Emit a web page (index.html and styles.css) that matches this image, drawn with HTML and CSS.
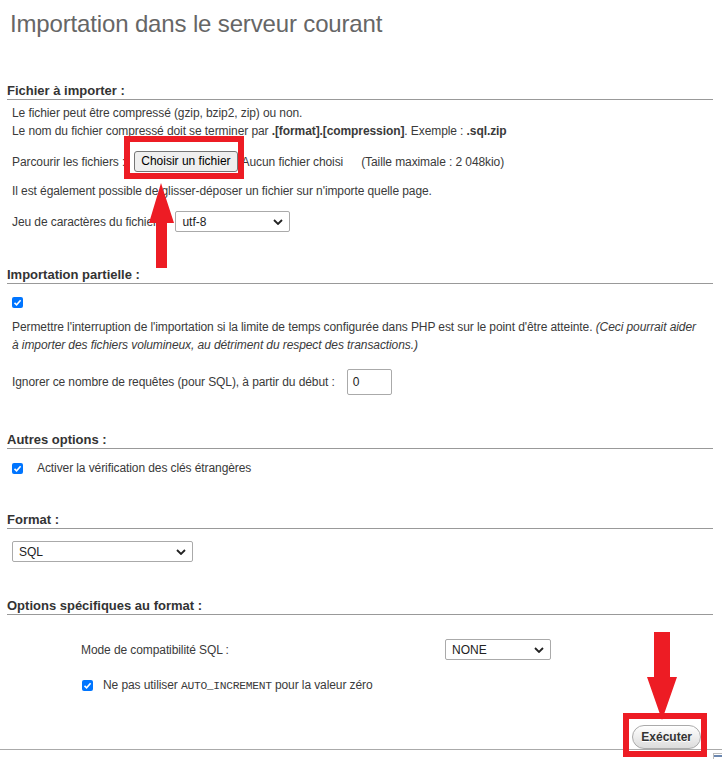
FILE: index.html
```html
<!DOCTYPE html>
<html lang="fr">
<head>
<meta charset="utf-8">
<title>Importation</title>
<link rel="stylesheet" href="styles.css">
</head>
<body>
<div class="page">
  <h2 class="title">Importation dans le serveur courant</h2>

  <section class="sec sec-file">
    <h3 class="sec-h">Fichier à importer :</h3>
    <div class="sec-body">
      <p class="line first">Le fichier peut être compressé (gzip, bzip2, zip) ou non.</p>
      <p class="line">Le nom du fichier compressé doit se terminer par <b>.[format].[compression]</b>. Exemple : <b>.sql.zip</b></p>
      <div class="row row-file">
        <span>Parcourir les fichiers :</span>
        <span class="file-btn">Choisir un fichier</span>
        <span class="file-none">Aucun fichier choisi</span>
        <span class="maxsize">(Taille maximale : 2 048kio)</span>
      </div>
      <p class="line line-drop">Il est également possible de glisser-déposer un fichier sur n'importe quelle page.</p>
      <div class="row row-charset">
        <span>Jeu de caractères du fichier :</span>
        <div class="select sel-charset"><span>utf-8</span><svg class="chev" viewBox="0 0 10 6" width="10" height="6"><path d="M1 1 L5 5 L9 1" fill="none" stroke="#222" stroke-width="1.8"/></svg></div>
      </div>
    </div>
  </section>

  <section class="sec sec-partial">
    <h3 class="sec-h">Importation partielle :</h3>
    <div class="sec-body">
      <div class="cb-solo"><span class="cb"><svg viewBox="0 0 11 11" width="11" height="11"><path d="M2.5 5.8 L4.6 7.8 L8.6 3.2" fill="none" stroke="#fff" stroke-width="1.6"/></svg></span></div>
      <p class="line para">Permettre l'interruption de l'importation si la limite de temps configurée dans PHP est sur le point d'être atteinte. <i>(Ceci pourrait aider à importer des fichiers volumineux, au détriment du respect des transactions.)</i></p>
      <div class="row row-skip">
        <span>Ignorer ce nombre de requêtes (pour SQL), à partir du début :</span>
        <span class="num-input">0</span>
      </div>
    </div>
  </section>

  <section class="sec sec-other">
    <h3 class="sec-h">Autres options :</h3>
    <div class="sec-body">
      <div class="row cb-row"><span class="cb"><svg viewBox="0 0 11 11" width="11" height="11"><path d="M2.5 5.8 L4.6 7.8 L8.6 3.2" fill="none" stroke="#fff" stroke-width="1.6"/></svg></span><span class="cb-label">Activer la vérification des clés étrangères</span></div>
    </div>
  </section>

  <section class="sec sec-format">
    <h3 class="sec-h">Format :</h3>
    <div class="sec-body">
      <div class="select sel-format"><span>SQL</span><svg class="chev" viewBox="0 0 10 6" width="10" height="6"><path d="M1 1 L5 5 L9 1" fill="none" stroke="#222" stroke-width="1.8"/></svg></div>
    </div>
  </section>

  <section class="sec sec-specific">
    <h3 class="sec-h">Options spécifiques au format :</h3>
    <div class="opt-grid">
      <span class="opt-label">Mode de compatibilité SQL :</span>
      <div class="select sel-mode"><span>NONE</span><svg class="chev" viewBox="0 0 10 6" width="10" height="6"><path d="M1 1 L5 5 L9 1" fill="none" stroke="#222" stroke-width="1.8"/></svg></div>
    </div>
    <div class="row cb-row cb-row-ai"><span class="cb"><svg viewBox="0 0 11 11" width="11" height="11"><path d="M2.5 5.8 L4.6 7.8 L8.6 3.2" fill="none" stroke="#fff" stroke-width="1.6"/></svg></span><span class="cb-label">Ne pas utiliser <code>AUTO_INCREMENT</code> pour la valeur zéro</span></div>
  </section>
</div>

<div class="footer">
  <span class="go-btn">Exécuter</span>
</div>

<span class="corner-icon"></span>

<svg class="annot" width="722" height="759" viewBox="0 0 722 759">
  <rect x="127" y="139" width="114" height="37" fill="none" stroke="#ed1c24" stroke-width="6"/>
  <polygon points="161,183 174,223 167,223 167,268 156,268 156,223 149,223" fill="#ed1c24"/>
  <polygon points="654,632 670,632 670,677 677,677 662,720 647,677 654,677" fill="#ed1c24"/>
  <rect x="626" y="716" width="78" height="38" fill="none" stroke="#ed1c24" stroke-width="6"/>
</svg>
</body>
</html>
```

FILE: styles.css
```css
html, body {
  margin: 0;
  padding: 0;
  background: #fff;
}
body {
  font-family: "Liberation Sans", Arial, sans-serif;
  font-size: 12px;
  color: #3a3a3a;
  width: 722px;
  height: 759px;
  overflow: hidden;
  position: relative;
}
.page {
  padding: 10px 9px 0 7px;
}
.title {
  margin: 0 0 0 3px;
  font-size: 24px;
  line-height: 28px;
  font-weight: normal;
  color: #666;
  letter-spacing: -0.15px;
}
.sec-h {
  margin: 0;
  font-size: 13px;
  line-height: 16px;
  font-weight: bold;
  color: #333;
  border-bottom: 1px solid #999;
  padding-left: 0;
}
.sec-file { margin-top: 45px; }
.sec-partial { margin-top: 35px; }
.sec-other { margin-top: 37px; }
.sec-format { margin-top: 35px; }
.sec-specific { margin-top: 36px; }

.sec-body {
  padding-left: 5px;
  letter-spacing: -0.09px;
}
.line {
  margin: 0;
  line-height: 18px;
}
.line.first { margin-top: 4px; }
.row {
  display: flex;
  align-items: center;
}
.row-file {
  margin-top: 11px;
  height: 21px;
}
.file-btn {
  margin-left: 9px;
  height: 19px;
  line-height: 19px;
  padding: 0 6px;
  background: #efefef;
  border: 1px solid #767676;
  border-radius: 3px;
  color: #000;
  letter-spacing: 0;
}
.file-none {
  margin-left: 4px;
}
.maxsize {
  margin-left: 18px;
}
.line-drop { margin-top: 10px; }
.row-charset {
  margin-top: 11px;
  height: 21px;
}
.select {
  box-sizing: border-box;
  height: 21px;
  border: 1px solid #aaa;
  border-radius: 2px;
  background: #fff;
  display: flex;
  align-items: center;
  justify-content: space-between;
  padding: 0 6px 0 6px;
  color: #222;
  letter-spacing: 0;
}
.sel-charset {
  margin-left: 12px;
  width: 115px;
}
.chev { display: block; }

.cb-solo {
  margin-top: 13px;
  height: 11px;
  display: flex;
}
.cb {
  box-sizing: border-box;
  width: 11px;
  height: 11px;
  background: #0075ff;
  border-radius: 2px;
  display: inline-flex;
  flex: none;
}
.cb svg { display: block; }
.para {
  margin-top: 10px;
  max-width: 692px;
}
.row-skip {
  margin-top: 15px;
  height: 26px;
}
.num-input {
  box-sizing: border-box;
  margin-left: 12px;
  width: 45px;
  height: 26px;
  border: 1px solid #aaa;
  border-radius: 2px;
  padding-left: 5px;
  line-height: 24px;
  color: #222;
}
.cb-row {
  margin-top: 10px;
  height: 18px;
}
.cb-label {
  margin-left: 14px;
}
.sel-format {
  margin-top: 12px;
  width: 181px;
}
.opt-grid {
  display: grid;
  grid-template-columns: 364px 106px;
  align-items: center;
  padding-left: 74px;
  margin-top: 24px;
  letter-spacing: -0.09px;
}
.sel-mode {
  width: 106px;
}
.cb-row-ai {
  margin-top: 16px;
  padding-left: 75px;
  letter-spacing: -0.09px;
}
.cb-row-ai .cb-label { margin-left: 10px; }
code {
  font-family: "Liberation Mono", "DejaVu Sans Mono", monospace;
  font-size: 11.3px;
  letter-spacing: -0.3px;
}
.footer {
  position: absolute;
  left: 0;
  right: 0;
  top: 725px;
  display: flex;
  justify-content: flex-end;
  padding-right: 21px;
  border-bottom: 1px solid #aaa;
}
.go-btn {
  box-sizing: border-box;
  height: 24px;
  line-height: 22px;
  padding: 0 8px;
  border: 1px solid #aaa;
  border-radius: 12px;
  background: linear-gradient(#ffffff, #dcdcdc);
  font-weight: bold;
  color: #333;
  text-shadow: 0 1px 0 #fff;
}
.corner-icon {
  position: absolute;
  left: 713px;
  top: 753px;
  width: 8px;
  height: 6px;
  border: 1px solid #bbb;
  border-bottom: none;
  background: linear-gradient(#fff 0 1px, #6b87b0 1px 3px, #fff 3px);
}
.annot {
  position: absolute;
  left: 0;
  top: 0;
  pointer-events: none;
}
```
